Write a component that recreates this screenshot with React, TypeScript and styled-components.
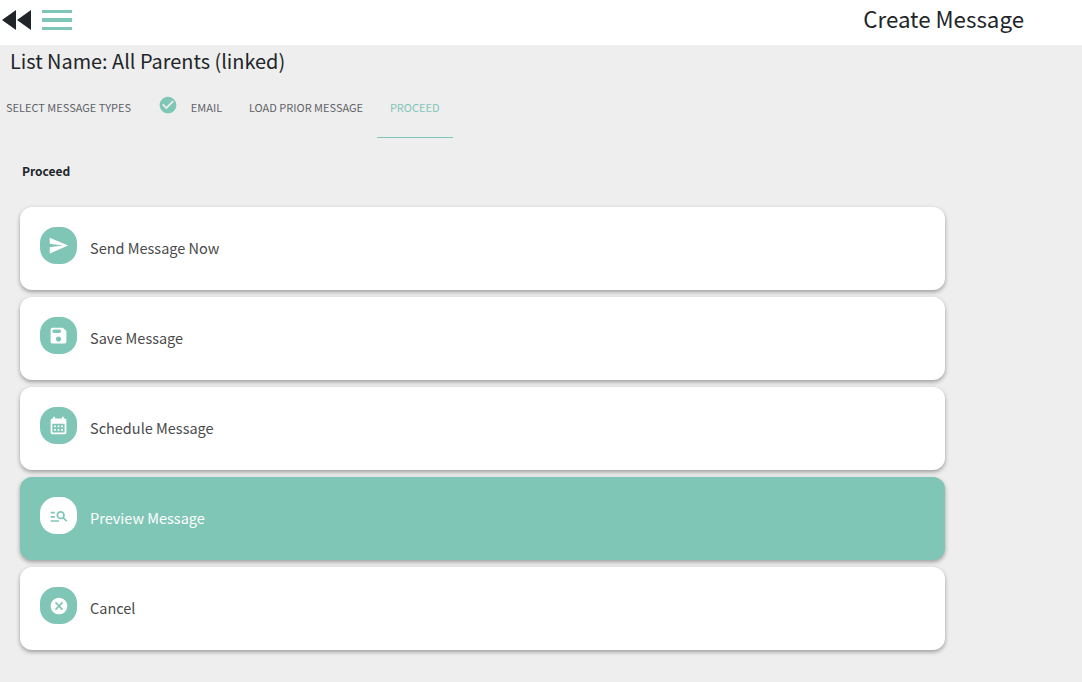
import React from 'react';
import styled, { createGlobalStyle } from 'styled-components';
import { MdSend, MdCalendarMonth, MdManageSearch, MdCancel, MdCheckCircle } from 'react-icons/md';

const TEAL = '#80c6b6';

const GlobalStyle = createGlobalStyle`
    html, body {
        margin: 0;
        padding: 0;
        background: #eeeeee;
    }
    body {
        font-family: 'Noto Sans CJK SC', 'Noto Sans', sans-serif;
        color: #212529;
    }
`;

const SaveIcon: React.FC = () => (
    <svg width="21" height="21" viewBox="0 0 24 24" fill="currentColor">
        <path d="M17.59 3.59c-.38-.38-.89-.59-1.42-.59H5a2 2 0 0 0-2 2v14c0 1.1.9 2 2 2h14c1.1 0 2-.9 2-2V7.83c0-.53-.21-1.04-.59-1.41l-2.82-2.83zM12 19c-1.66 0-3-1.34-3-3s1.34-3 3-3 3 1.34 3 3-1.34 3-3 3zm1-10H7c-1.1 0-2-.9-2-2s.9-2 2-2h6c1.1 0 2 .9 2 2s-.9 2-2 2z" />
    </svg>
);

const options = [
    { label: 'Send Message Now', icon: <MdSend size={21} /> },
    { label: 'Save Message', icon: <SaveIcon /> },
    { label: 'Schedule Message', icon: <MdCalendarMonth size={21} /> },
    { label: 'Preview Message', icon: <MdManageSearch size={20} />, active: true },
    { label: 'Cancel', icon: <MdCancel size={20} /> },
];

const App: React.FC = () => {
    return (
        <Page>
            <GlobalStyle />
            <Header>
                <HeaderLeft>
                    <svg width="30" height="20" viewBox="0 0 30 20" fill="#212529">
                        <polygon points="0,10 14,0 14,20" />
                        <polygon points="15,10 29,0 29,20" />
                    </svg>
                    <Burger>
                        <span />
                        <span />
                        <span />
                    </Burger>
                </HeaderLeft>
                <PageTitle>Create Message</PageTitle>
            </Header>
            <ListName>List Name: All Parents (linked)</ListName>
            <Tabs>
                <Tab>Select Message Types</Tab>
                <Tab>
                    <CheckIcon>
                        <MdCheckCircle size={20} />
                    </CheckIcon>
                    Email
                </Tab>
                <Tab>Load Prior Message</Tab>
                <Tab $active>Proceed</Tab>
            </Tabs>
            <Content>
                <SectionTitle>Proceed</SectionTitle>
                <CardList>
                    {options.map((option) => (
                        <Card key={option.label} $active={option.active}>
                            <IconBox $active={option.active}>{option.icon}</IconBox>
                            <CardLabel>{option.label}</CardLabel>
                        </Card>
                    ))}
                </CardList>
            </Content>
        </Page>
    );
};

const Page = styled.div`
    min-height: 682px;
    background: #eeeeee;
    overflow: hidden;
`;

const Header = styled.header`
    height: 45px;
    box-sizing: border-box;
    background: #ffffff;
    display: flex;
    align-items: center;
    justify-content: space-between;
    padding: 0 58px 5px 2px;
`;

const HeaderLeft = styled.div`
    display: flex;
    align-items: center;
    gap: 10px;
`;

const Burger = styled.div`
    width: 30px;
    height: 20px;
    display: flex;
    flex-direction: column;
    justify-content: space-between;
    span {
        display: block;
        height: 3.4px;
        background: ${TEAL};
    }
`;

const PageTitle = styled.h1`
    margin: 0 0 4px;
    font-size: 22.3px;
    line-height: 36px;
    font-weight: 400;
    color: #212529;
`;

const ListName = styled.div`
    height: 33px;
    padding-left: 10px;
    font-size: 19.9px;
    line-height: 32px;
    color: #212529;
`;

const Tabs = styled.nav`
    display: flex;
    height: 60px;
`;

const Tab = styled.div<{ $active?: boolean }>`
    display: flex;
    align-items: center;
    padding: 0 13.4px 2px;
    font-size: 11px;
    line-height: 18px;
    text-transform: uppercase;
    color: ${(props) => (props.$active ? TEAL : '#5f6368')};
    border-bottom: 1px solid ${(props) => (props.$active ? TEAL : 'transparent')};
    &:first-child {
        padding-left: 6px;
    }
`;

const CheckIcon = styled.span`
    display: inline-flex;
    color: ${TEAL};
    margin-right: 13px;
    margin-top: -4px;
`;

const Content = styled.main`
    width: 925px;
    padding: 23px 0 0 20px;
`;

const SectionTitle = styled.div`
    padding-left: 2px;
    font-size: 12px;
    line-height: 19px;
    font-weight: 700;
    color: #212529;
`;

const CardList = styled.div`
    margin-top: 27px;
    display: flex;
    flex-direction: column;
    gap: 7px;
`;

const Card = styled.div<{ $active?: boolean }>`
    height: 83px;
    box-sizing: border-box;
    padding: 20px;
    display: flex;
    align-items: flex-start;
    gap: 13px;
    border-radius: 12px;
    background: ${(props) => (props.$active ? TEAL : '#ffffff')};
    color: ${(props) => (props.$active ? '#ffffff' : '#4a4a4a')};
    box-shadow: 0 2px 4px rgba(0, 0, 0, 0.35);
`;

const IconBox = styled.div<{ $active?: boolean }>`
    width: 37px;
    height: 37px;
    flex-shrink: 0;
    display: flex;
    align-items: center;
    justify-content: center;
    border-radius: 16px;
    background: ${(props) => (props.$active ? '#ffffff' : TEAL)};
    color: ${(props) => (props.$active ? TEAL : '#ffffff')};
`;

const CardLabel = styled.div`
    margin-top: 9px;
    font-size: 14.5px;
    line-height: 24px;
`;

export default App;
